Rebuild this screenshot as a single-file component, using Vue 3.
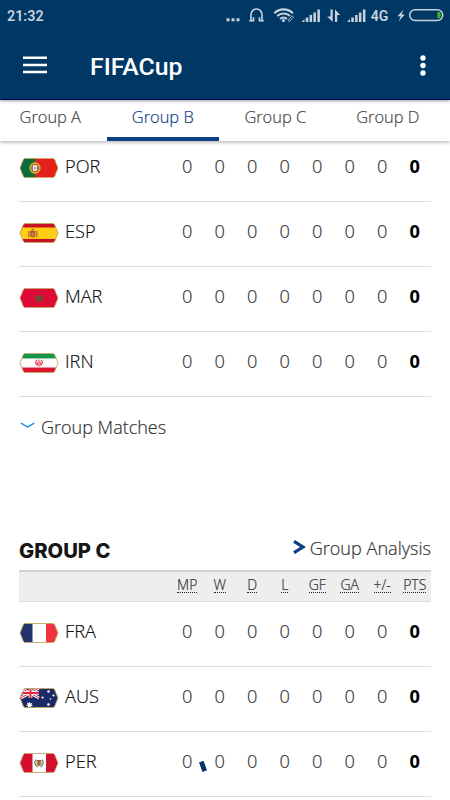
<script setup>

import { ref } from 'vue';

const tabs = ['Group A', 'Group B', 'Group C', 'Group D'];
const activeTab = ref('Group B');

const columns = ['MP', 'W', 'D', 'L', 'GF', 'GA', '+/-', 'PTS'];
const emptyStats = [0, 0, 0, 0, 0, 0, 0, 0];

const groups = ref([
    {
        name: 'Group B',
        teams: [
            { code: 'POR', stats: emptyStats },
            { code: 'ESP', stats: emptyStats },
            { code: 'MAR', stats: emptyStats },
            { code: 'IRN', stats: emptyStats }
        ]
    },
    {
        name: 'Group C',
        teams: [
            { code: 'FRA', stats: emptyStats },
            { code: 'AUS', stats: emptyStats },
            { code: 'PER', stats: emptyStats }
        ]
    }
]);

</script>
<template>
    <div class="screen">
        <header class="app-header">
            <div class="status-bar">
                <span class="clock">21:32</span>
                <svg class="status-icons" width="225" height="31" viewBox="0 0 225 31">
                    <g fill="#c9d3de">
                        <rect x="1.5" y="18.3" width="3" height="3" />
                        <rect x="6.5" y="18.3" width="3" height="3" />
                        <rect x="11.5" y="18.3" width="3" height="3" />
                    </g>
                    <!-- headset -->
                    <g fill="none" stroke="#c9d3de" stroke-width="1.6">
                        <path d="M26 20.800V14.500a5.500 5.500 0 0 1 5.500-5.500h0a5.500 5.500 0 0 1 5.500 5.500V20.800" />
                        <path d="M24.200 20.800h4.300v-3.600M38.800 20.800h-4.300v-3.600" />
                    </g>
                    <!-- wifi -->
                    <g fill="none" stroke="#c9d3de" stroke-width="2.1">
                        <path d="M49.300 13.200a13.200 13.200 0 0 1 18.600 0" />
                        <path d="M52.200 16.100a9.200 9.200 0 0 1 12.800 0" />
                        <path d="M55.200 19a5 5 0 0 1 6.800 0" />
                    </g>
                    <circle cx="58.5" cy="20.6" r="1.5" fill="#c9d3de" />
                    <path d="M63 20.500l4.200-4.700 1.400 1.300-4.200 4.400z" fill="#003865" stroke="#c9d3de" stroke-width=".8" />
                    <!-- mobile signal -->
                    <g fill="#c9d3de">
                        <path d="M76.500 22l3-3V22zM80.800 17.500h2.500V22h-2.500zM84.600 15h2.500v7h-2.500zM88.400 12.500h2.500V22h-2.500zM92.400 9.500h2.500V22h-2.500z" />
                        <path d="M122 22l3-3V22zM126.300 17.500h2.500V22h-2.500zM130.100 15h2.500v7h-2.500zM133.900 12.500h2.500V22h-2.500zM137.900 9.500h2.500V22h-2.500z" />
                        <path d="M105.500 9.500h2.200V22l-5.500-5.500h3.300zM110 22V9.500l5.200 5.500h-3V22z" />
                    </g>
                    <text x="145.8" y="21" class="network-type">4G</text>
                    <path d="M178.500 9.500l-6 6.700h3.200l-2 5.300 6-7h-3.200z" fill="#c9d3de" />
                    <rect x="184.700" y="9.700" width="33" height="10.800" rx="5.400" fill="none" stroke="#c9d3de" stroke-width="1.5" />
                    <path d="M212.500 12h1.800a4 4 0 0 1 0 6.200h-1.800z" fill="#36c80a" />
                </svg>
            </div>
            <div class="toolbar">
                <svg class="menu-icon" width="24" height="18" viewBox="0 0 24 18">
                    <path d="M0 1.800h24M0 9h24M0 16.100h24" stroke="#fff" stroke-width="2.500" />
                </svg>
                <h1 class="title">FIFACup</h1>
                <svg class="more-icon" width="6" height="21" viewBox="0 0 6 21">
                    <g fill="#fff">
                        <circle cx="3" cy="3" r="2.7" />
                        <circle cx="3" cy="10.5" r="2.7" />
                        <circle cx="3" cy="18" r="2.7" />
                    </g>
                </svg>
            </div>
        </header>
        <nav class="tabs">
            <a v-for="tab in tabs" :key="tab" class="tab" :class="{ active: tab == activeTab }" @click.prevent="activeTab = tab">{{ tab }}</a>
        </nav>

        <main class="content">
            <section v-for="(group, index) in groups" :key="group.name" class="group">
                <div class="group-head" v-if="index > 0">
                    <h2 class="group-name">{{ group.name }}</h2>
                    <a class="analysis">
                        <svg width="13" height="14" viewBox="0 0 13 14">
                            <path d="M1 1.300L10 7 1 12.700" fill="none" stroke="#0a3f86" stroke-width="3.200" />
                        </svg>
                        <span>Group Analysis</span>
                    </a>
                </div>
                <div class="table-head" v-if="index > 0">
                    <span v-for="column in columns" :key="column" class="cell"><abbr>{{ column }}</abbr></span>
                </div>
                <div v-for="team in group.teams" :key="team.code" class="row">
                    <svg class="flag" width="40" height="22" viewBox="0 0 40 22">
                        <defs>
                            <clipPath :id="'flag-' + team.code">
                                <path d="M6.500 1.500h27q1.500 0 2.200 1.300L39 11l-3.300 8.200q-.7 1.300-2.200 1.300h-27q-1.500 0-2.200-1.300L1 11l3.300-8.200q.7-1.300 2.200-1.300z" />
                            </clipPath>
                        </defs>
                        <g :clip-path="'url(#flag-' + team.code + ')'">
                            <template v-if="team.code == 'POR'">
                                <rect width="40" height="22" fill="#e4201b" />
                                <rect width="16" height="22" fill="#0e6b3b" />
                                <circle cx="16" cy="11" r="5" fill="#7d8a30" stroke="#d8bc2c" stroke-width="1.300" />
                                <path d="M13 7.500h6v4.500q0 3-3 3t-3-3z" fill="#dc3028" />
                                <path d="M13.800 8.300h4.400V12q0 2.200-2.200 2.200T13.800 12z" fill="#fff" />
                                <path d="M16 9.300v3.700M14.500 11h3" stroke="#8794b4" />
                            </template>
                            <template v-else-if="team.code == 'ESP'">
                                <rect width="40" height="22" fill="#c91022" />
                                <rect y="5.500" width="40" height="11.500" fill="#ffce14" />
                                <path d="M9.800 9v6.500M17.800 9v6.500" stroke="#a47842" stroke-width="1.400" />
                                <path d="M11.300 9h5v5q-2.500 3-5 0z" fill="#b84226" />
                                <path d="M11.800 8.200q2-3 4 0z" fill="#9c4926" />
                                <path d="M13.800 10v5M11.800 12h4" stroke="#d9a06c" stroke-width=".8" />
                            </template>
                            <template v-else-if="team.code == 'MAR'">
                                <rect width="40" height="22" fill="#de0a35" />
                                <path d="M20 7.500l2.300 6.700-5.800-4.100h7l-5.800 4.100z" fill="none" stroke="#4a6030" stroke-width="1.100" />
                            </template>
                            <template v-else-if="team.code == 'IRN'">
                                <rect width="40" height="22" fill="#fff" />
                                <rect width="40" height="6.500" fill="#169447" />
                                <rect y="15.500" width="40" height="6.500" fill="#d9162d" />
                                <path d="M1 6.700h38" stroke="#a9d8b9" stroke-dasharray="1 1" />
                                <path d="M1 15.300h38" stroke="#eda2aa" stroke-dasharray="1 1" />
                                <path d="M20 7.500v7M18 8q-3.500 3 1 5.500M22 8q3.500 3-1 5.500M18.500 10v2M21.500 10v2" fill="none" stroke="#e0404c" stroke-width="1.100" />
                            </template>
                            <template v-else-if="team.code == 'FRA'">
                                <rect width="40" height="22" fill="#fff" />
                                <rect width="13.500" height="22" fill="#23336c" />
                                <rect x="27" width="13" height="22" fill="#ee3340" />
                            </template>
                            <template v-else-if="team.code == 'AUS'">
                                <rect width="40" height="22" fill="#1b2a66" />
                                <path d="M2 1l18 10M20 1L2 11" stroke="#fff" stroke-width="2.600" />
                                <path d="M2 1l18 10M20 1L2 11" stroke="#e32d3c" stroke-width="1" />
                                <path d="M11.500 0v11M0 6h20" stroke="#fff" stroke-width="3.600" />
                                <path d="M11.500 0v11M0 6h20" stroke="#e32d3c" stroke-width="2" />
                                <path d="M10.500 14.500l.8 1.900 2-.7-.9 1.900 1.700 1.100-2.100.2-.2 2-1.300-1.500-1.600 1.300.1-2-2-.3 1.700-1.100-.8-1.900 2 .7z" fill="#fff" />
                                <g fill="#fff">
                                    <circle cx="23.500" cy="10.500" r="1.100" />
                                    <circle cx="29.500" cy="4.500" r="1.200" />
                                    <circle cx="34.500" cy="8.500" r="1.100" />
                                    <circle cx="31.500" cy="12" r=".8" />
                                    <circle cx="29.500" cy="17.500" r="1.300" />
                                </g>
                            </template>
                            <template v-else-if="team.code == 'PER'">
                                <rect width="40" height="22" fill="#fff" />
                                <rect width="13.500" height="22" fill="#d20f2d" />
                                <rect x="27" width="13" height="22" fill="#d20f2d" />
                                <path d="M17.500 8h5v4.500q-2.500 3-5 0z" fill="#a79355" />
                                <path d="M17 7.500q-3 4 1.500 7.500M23 7.500q3 4-1.500 7.500" fill="none" stroke="#568060" stroke-width="1.200" />
                                <path d="M18 8.500h4M20 9v5" stroke="#b54234" stroke-width="1.200" />
                            </template>
                        </g>
                        <path d="M6.500 1.500h27q1.500 0 2.200 1.300L39 11l-3.300 8.200q-.7 1.300-2.200 1.300h-27q-1.500 0-2.200-1.300L1 11l3.300-8.200q.7-1.300 2.200-1.300z" fill="none" stroke="#c6a866" stroke-width=".9" />
                    </svg>
                    <span class="team-code">{{ team.code }}</span>
                    <span v-for="(stat, i) in team.stats" :key="i" class="cell" :class="{ points: i == columns.length - 1 }">{{ stat }}</span>
                    <svg v-if="team.code == 'PER'" class="spinner" width="10" height="14" viewBox="0 0 10 14">
                        <path d="M1 2.500l4.500-1.700L9 10.200 4.500 12z" fill="#07326b" />
                    </svg>
                </div>
                <a class="matches" v-if="index == 0">
                    <svg width="15" height="7" viewBox="0 0 15 7">
                        <path d="M.8 1.200L7.500 4.800l6.700-3.600" fill="none" stroke="#1d8fe8" stroke-width="1.500" />
                    </svg>
                    <span>Group Matches</span>
                </a>
            </section>
        </main>
    </div>
</template>

<style>
body{
    background-color: #fff;
    overflow: hidden;
}
</style>
<style scoped>
.screen{
    width: 450px;
    height: 800px;
    overflow: hidden;
    background-color: #fff;
    font-family: "Open Sans", "Noto Sans", sans-serif;
    font-weight: 300;
    color: #333;
}
.app-header{
    position: relative;
    z-index: 2;
    box-sizing: border-box;
    height: 100px;
    background-color: #003865;
    border-bottom: 1px solid #00095a;
    box-shadow: 0 1px 3px rgba(0, 0, 0, .4);
}
.status-bar{
    display: flex;
    justify-content: space-between;
    height: 31px;
    padding-left: 7px;
    font-family: Roboto, sans-serif;
}
.clock{
    font-size: 14.3px;
    font-weight: 600;
    line-height: 32px;
    color: #c9d3de;
}
.network-type{
    font-family: Roboto, sans-serif;
    font-size: 14px;
    font-weight: 600;
    fill: #c9d3de;
}
.toolbar{
    display: flex;
    align-items: center;
    height: 68px;
    padding: 0 24.5px 0 23px;
}
.title{
    flex: 1;
    margin: 4px 0 0 43px;
    font-family: Roboto, sans-serif;
    font-size: 24.8px;
    font-weight: 500;
    line-height: 30px;
    color: #fff;
}
.tabs{
    position: relative;
    z-index: 1;
    display: flex;
    height: 41px;
    background-color: #fff;
    box-shadow: 0 1px 4px rgba(0, 0, 0, .35);
}
.tab{
    flex: none;
    box-sizing: border-box;
    width: 112.5px;
    height: 41px;
    border-bottom: 4px solid transparent;
    font-size: 16.4px;
    line-height: 34px;
    text-align: center;
    color: #444;
    -webkit-text-stroke: .2px;
}
.tab:first-child{
    margin-left: -6px;
}
.tab.active{
    border-bottom-color: #0d4086;
    color: #0d4086;
}
.content{
    padding: 0 19px;
    margin-top: -4px;
}
.row{
    position: relative;
    display: flex;
    align-items: center;
    box-sizing: border-box;
    height: 65px;
    padding-bottom: 7px;
    border-bottom: 1px solid #dedede;
}
.flag{
    flex: none;
    margin-top: 4px;
}
.team-code{
    flex: 1;
    padding-left: 6px;
    font-size: 18.2px;
    line-height: 24px;
    color: #111;
    -webkit-text-stroke: .2px;
}
.cell{
    flex: none;
    width: 32.5px;
    font-size: 18.2px;
    line-height: 24px;
    text-align: center;
    -webkit-text-stroke: .2px;
}
.cell.points{
    font-weight: 700;
    color: #000;
    -webkit-text-stroke: 0;
}
.spinner{
    position: absolute;
    left: 179px;
    top: 28px;
}
.matches{
    display: flex;
    align-items: center;
    gap: 6px;
    height: 59px;
    padding-left: 1px;
    font-size: 18px;
    -webkit-text-stroke: .2px;
}
.matches svg{
    margin-bottom: 2px;
}
.group-head{
    display: flex;
    justify-content: space-between;
    align-items: center;
    height: 43px;
    margin-top: 70px;
    padding-bottom: 1px;
}
.group-name{
    margin: 7px 0 0;
    font-family: Inter, sans-serif;
    font-size: 20.2px;
    font-weight: 800;
    line-height: 24px;
    letter-spacing: 0;
    text-transform: uppercase;
    color: #161616;
}
.analysis{
    display: flex;
    align-items: center;
    gap: 4px;
    font-size: 18.1px;
    -webkit-text-stroke: .2px;
}
.analysis svg{
    margin-bottom: 2px;
}
.table-head{
    display: flex;
    justify-content: flex-end;
    box-sizing: border-box;
    height: 32px;
    background-color: #eee;
    border-top: 2px solid #d2d2d2;
    border-bottom: 1px solid #dedede;
}
.table-head .cell{
    font-size: 14px;
    line-height: 25px;
}
.table-head abbr{
    display: inline-block;
    line-height: 15px;
    border-bottom: 1px dotted #222;
}
</style>
